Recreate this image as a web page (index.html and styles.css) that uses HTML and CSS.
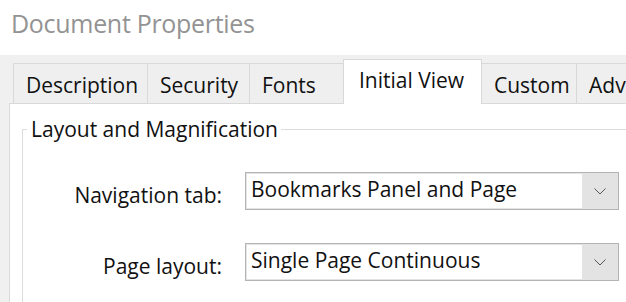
FILE: index.html
```html
<!DOCTYPE html>
<html>
<head>
<meta charset="utf-8">
<link rel="stylesheet" href="styles.css">
</head>
<body>
<div class="title">Document Properties</div>
<div class="dialog">
  <div class="tabs">
    <div class="tab t-desc">Description</div>
    <div class="tab t-sec">Security</div>
    <div class="tab t-fonts">Fonts</div>
    <div class="tab active t-init">Initial View</div>
    <div class="tab t-cust">Custom</div>
    <div class="tab t-adv">Advanced</div>
  </div>
  <div class="panel">
    <fieldset class="group">
      <legend>Layout and Magnification</legend>
      <div class="row">
        <span class="label">Navigation tab:</span>
        <div class="select">
          <span class="value">Bookmarks Panel and Page</span>
          <span class="btn"><svg width="12" height="7" viewBox="0 0 12 7"><polyline points="0.5,0.5 6,6 11.5,0.5" fill="none" stroke="#555" stroke-width="1"/></svg></span>
        </div>
      </div>
      <div class="row">
        <span class="label">Page layout:</span>
        <div class="select">
          <span class="value">Single Page Continuous</span>
          <span class="btn"><svg width="12" height="7" viewBox="0 0 12 7"><polyline points="0.5,0.5 6,6 11.5,0.5" fill="none" stroke="#555" stroke-width="1"/></svg></span>
        </div>
      </div>
    </fieldset>
  </div>
</div>
</body>
</html>
```

FILE: styles.css
```css
html, body {
  margin: 0;
  padding: 0;
  background: #fff;
  overflow: hidden;
  width: 626px;
  height: 302px;
}
body {
  font-family: "Open Sans", "Noto Sans", sans-serif;
  color: #111;
}
.title {
  height: 55px;
  box-sizing: border-box;
  padding: 6px 0 0 11px;
  font-size: 25px;
  letter-spacing: -0.3px;
  line-height: 34px;
  color: #939393;
  white-space: nowrap;
}
.dialog {
  background: #f0f0f0;
  padding: 4px 0 0 9px;
  height: 247px;
  box-sizing: border-box;
}
.tabs {
  display: flex;
  align-items: flex-end;
  margin-left: 4px;
  height: 44px;
  white-space: nowrap;
}
.tab {
  box-sizing: border-box;
  height: 40px;
  border: 1px solid #d9d9d9;
  border-bottom: none;
  border-right: none;
  padding: 7px 0 0 12px;
  font-size: 21px;
  line-height: 28px;
  background: #efefef;
  flex: none;
  overflow: hidden;
}
.t-desc { width: 134px; }
.t-sec { width: 102px; }
.t-fonts { width: 94px; }
.t-init { width: 139px; }
.t-cust { width: 94px; }
.t-adv { width: 120px; }
.tab.active {
  height: 45px;
  margin-bottom: -1px;
  background: #fff;
  border-right: 1px solid #d9d9d9;
  padding: 6px 0 0 15px;
  position: relative;
  z-index: 1;
}
.tab.active + .tab { border-left: none; }
.panel {
  background: #fff;
  border-top: 1px solid #d9d9d9;
  border-left: 1px solid #d9d9d9;
  height: 200px;
  padding: 12px 0 0 12px;
  box-sizing: border-box;
}
.group {
  margin: 0;
  padding: 30px 0 0 0;
  border: 1px solid #dcdcdc;
  border-right: none;
  border-bottom: none;
  height: 200px;
}
.group legend {
  margin-left: 4px;
  padding: 0 3px 0 4px;
  font-size: 21px;
  line-height: 26px;
}
.row {
  display: flex;
  align-items: flex-start;
  height: 38px;
  margin-bottom: 33px;
}
.label {
  width: 199px;
  text-align: right;
  font-size: 21px;
  line-height: 28px;
  padding-top: 9px;
  flex: none;
}
.select {
  margin-left: 23px;
  width: 374px;
  height: 38px;
  box-sizing: border-box;
  border: 1px solid #b4b4b4;
  background: #e3e3e3;
  padding: 1px;
  display: flex;
  flex: none;
}
.value {
  flex: 1;
  background: #fff;
  font-size: 21px;
  line-height: 30px;
  padding: 0 0 0 4px;
  white-space: nowrap;
  overflow: hidden;
}
.btn {
  width: 35px;
  display: flex;
  align-items: center;
  justify-content: center;
}
```
